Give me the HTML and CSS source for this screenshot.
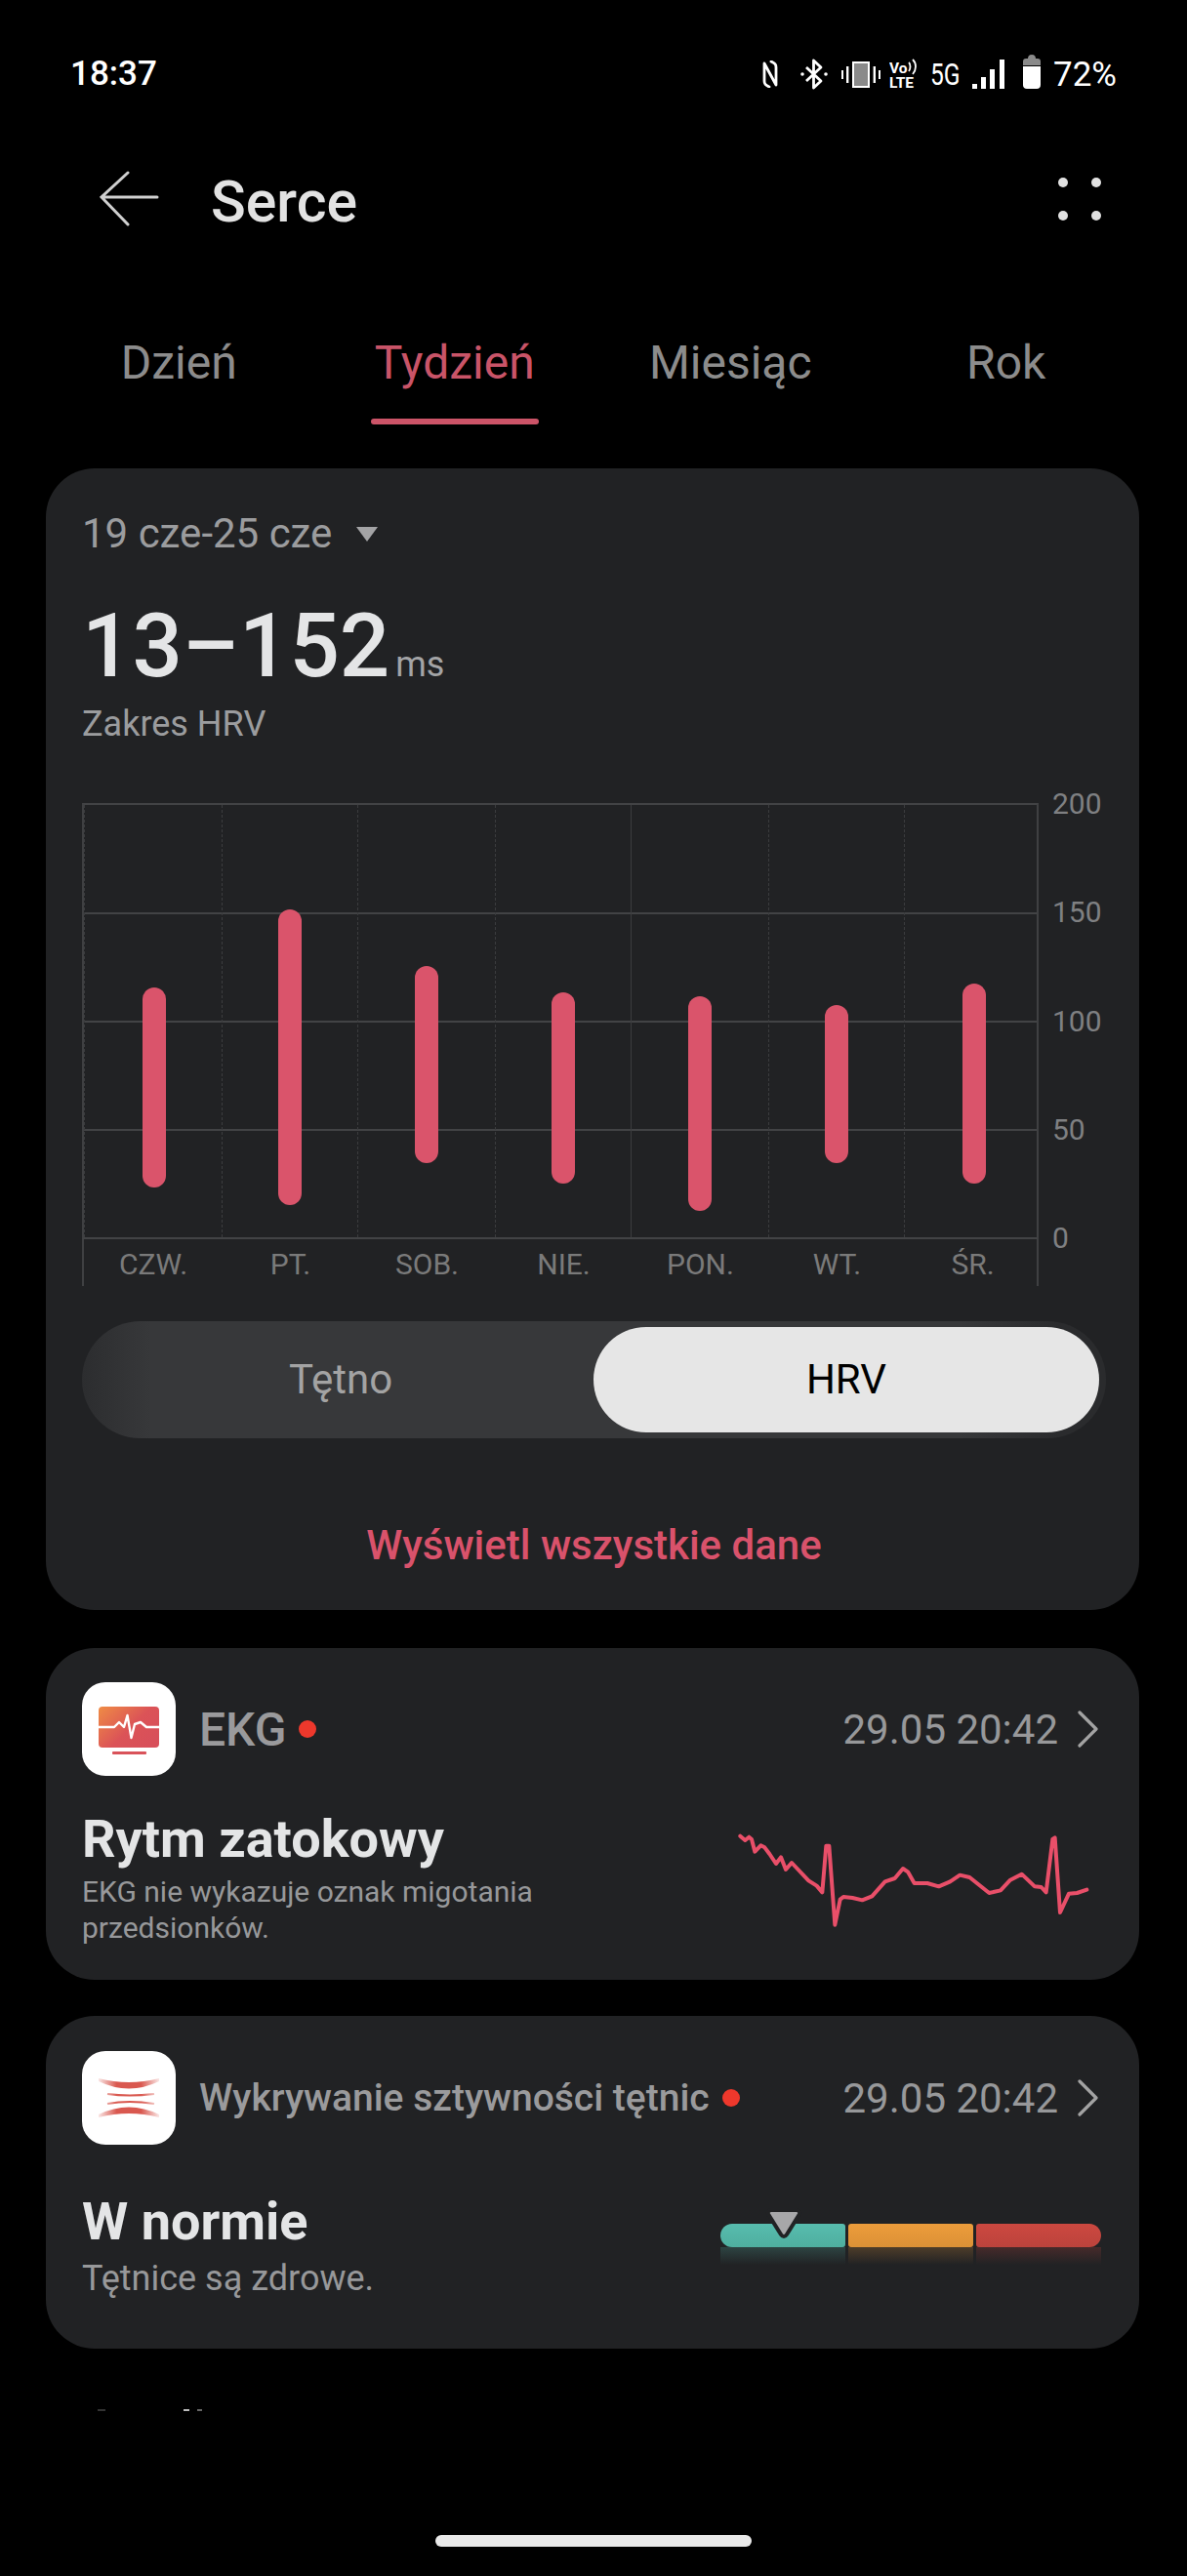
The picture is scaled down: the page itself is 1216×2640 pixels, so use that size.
FILE: index.html
```html
<!DOCTYPE html>
<html lang="pl">
<head>
    <meta charset="UTF-8">
    <meta name="viewport" content="width=device-width, initial-scale=1.0">
    <title>Serce</title>
    <link rel="stylesheet" href="styles.css">
</head>
<body>
    <!-- pasek stanu -->
    <div class="status-bar">
        <span class="time">18:37</span>
        <div class="status-icons">
            <svg class="ic-nfc" width="18" height="28" viewBox="0 0 18 28" fill="none" stroke="#fff" stroke-width="2.8" stroke-linecap="round" stroke-linejoin="round">
                <path d="M8 27C4 25 3 24 3 21V3L15 25V7C15 4 14 3 10 1"/>
            </svg>
            <svg class="ic-bt" width="28" height="32" viewBox="0 0 28 32" fill="none" stroke="#fff" stroke-width="2.8" stroke-linejoin="round">
                <path d="M6 9L21 23L13.5 30V2L21 9L6 23"/>
                <circle cx="2" cy="16" r="1.8" fill="#fff" stroke="none"/>
                <circle cx="26" cy="16" r="1.8" fill="#fff" stroke="none"/>
            </svg>
            <svg class="ic-vib" width="40" height="27" viewBox="0 0 40 27">
                <rect x="12" y="1" width="16" height="25" fill="#8a8a8a" stroke="#fff" stroke-width="2"/>
                <rect x="0" y="9" width="2" height="9" fill="#fff"/>
                <rect x="5" y="5" width="2.4" height="17" fill="#fff"/>
                <rect x="32.6" y="5" width="2.4" height="17" fill="#fff"/>
                <rect x="38" y="9" width="2" height="9" fill="#fff"/>
            </svg>
            <svg class="ic-volte" width="30" height="38" viewBox="0 0 30 38">
                <text x="0" y="18" class="volte-text">Vo</text>
                <text x="0" y="33" class="volte-text">LTE</text>
                <path d="M20 7C22 9 22 13 20 16M24 4C28 8 28 14 24 19" fill="none" stroke="#fff" stroke-width="1.8"/>
            </svg>
            <span class="net">5G</span>
            <svg class="ic-signal" width="33" height="30" viewBox="0 0 33 30" fill="#fff">
                <rect x="0" y="25" width="5" height="5"/>
                <rect x="9" y="18" width="5" height="12"/>
                <rect x="18" y="10" width="5" height="20"/>
                <rect x="28" y="0" width="5" height="30"/>
            </svg>
            <svg class="ic-batt" width="18" height="35" viewBox="0 0 18 35">
                <path d="M0 7C0 5 1 4 3 4H5C5 2 6 0 9 0C12 0 13 2 13 4H15C17 4 18 5 18 7V11H0Z" fill="#8a8a8a"/>
                <path d="M0 12H18V31C18 33.500 16.500 35 14 35H4C1.500 35 0 33.500 0 31Z" fill="#fff"/>
            </svg>
            <span class="batt-level">72%</span>
        </div>
    </div>

    <!-- nagłówek -->
    <header class="app-header">
        <svg class="back" width="62" height="58" viewBox="0 0 62 58" fill="none" stroke="#d0d0d0" stroke-width="3" stroke-linecap="round">
            <path d="M2 27H59M29 2L2 27L29 55"/>
        </svg>
        <h1>Serce</h1>
        <div class="more">
            <span></span><span></span><span></span><span></span>
        </div>
    </header>

    <!-- zakres czasu -->
    <nav class="tabs">
        <div class="tab">Dzień</div>
        <div class="tab active">Tydzień</div>
        <div class="tab">Miesiąc</div>
        <div class="tab">Rok</div>
    </nav>

    <section class="card card-main">
        <div class="range">19 cze-25 cze <span class="range-arrow"></span></div>
        <div class="value">13–152<small>ms</small></div>
        <div class="value-label">Zakres HRV</div>

        <div class="chart">
            <div class="chart-left">
                <div class="plot">
                    <div class="col"><i class="bar" style="margin-top:187px;height:205px"></i></div>
                    <div class="col"><i class="bar" style="margin-top:107px;height:303px"></i></div>
                    <div class="col"><i class="bar" style="margin-top:165px;height:202px"></i></div>
                    <div class="col"><i class="bar" style="margin-top:192px;height:196px"></i></div>
                    <div class="col solid"><i class="bar" style="margin-top:196px;height:220px"></i></div>
                    <div class="col"><i class="bar" style="margin-top:205px;height:162px"></i></div>
                    <div class="col"><i class="bar" style="margin-top:183px;height:205px"></i></div>
                </div>
                <div class="days">
                    <span>CZW.</span><span>PT.</span><span>SOB.</span><span>NIE.</span><span>PON.</span><span>WT.</span><span>ŚR.</span>
                </div>
            </div>
            <div class="y-axis">
                <span>200</span><span>150</span><span>100</span><span>50</span><span>0</span>
            </div>
        </div>

        <div class="switch">
            <div class="switch-off">Tętno</div>
            <div class="switch-on">HRV</div>
        </div>

        <div class="show-all">Wyświetl wszystkie dane</div>
    </section>

    <section class="card card-small">
        <div class="card-head">
            <svg class="app-icon" width="96" height="96" viewBox="0 0 96 96">
                <defs>
                    <linearGradient id="ekgFill" x1="0" y1="0" x2="1" y2="0.7">
                        <stop offset="0" stop-color="#ef8c45"/>
                        <stop offset="0.6" stop-color="#db5357"/>
                        <stop offset="1" stop-color="#d84f5a"/>
                    </linearGradient>
                </defs>
                <rect width="96" height="96" rx="24" fill="#fff"/>
                <rect x="17" y="25" width="62" height="42" rx="4" fill="url(#ekgFill)"/>
                <rect x="31" y="71" width="35" height="3" rx="1" fill="#d9535a"/>
                <path d="M17 46H33L38 41L43 46L46.500 34L50.500 57L54 43L60 41L66 46H79" fill="none" stroke="#fff" stroke-width="2.4" stroke-linejoin="round"/>
            </svg>
            <span class="head-title">EKG</span>
            <span class="red-dot"></span>
            <span class="head-date">29.05 20:42</span>
            <svg class="chevron" width="22" height="38" viewBox="0 0 22 38" fill="none" stroke="#a3a3a3" stroke-width="3.2" stroke-linecap="round" stroke-linejoin="round">
                <path d="M3 2L20 19L3 36"/>
            </svg>
        </div>
        <div class="card-body">
            <div class="result">
                <div class="result-title">Rytm zatokowy</div>
                <div class="result-text">EKG nie wykazuje oznak migotania przedsionków.</div>
            </div>
            <svg class="ecg" width="400" height="150" viewBox="0 0 1200 450" fill="none" stroke="#e94f69" stroke-width="12" stroke-linecap="round" stroke-linejoin="round">
                <path d="M85 95L100 108L112 98L120 105L130 143L148 124L160 130L175 150L195 180L210 160L225 198L243 177L260 195L295 232L320 248L337 268L349 125L358 125L376 368L392 290L402 282L430 285L460 292L490 280L530 235L560 225L585 195L600 205L620 240L660 240L695 250L730 235L760 215L790 222L850 270L885 262L915 230L950 212L990 250L1010 252L1025 268L1045 105L1052 100L1068 330L1095 272L1120 270L1150 260"/>
            </svg>
        </div>
    </section>

    <section class="card card-small card-arteries">
        <div class="card-head">
            <svg class="app-icon" width="96" height="96" viewBox="0 0 96 96">
                <defs>
                    <linearGradient id="arteryFill" gradientUnits="userSpaceOnUse" x1="17" y1="0" x2="79" y2="0">
                        <stop offset="0" stop-color="#d9584f" stop-opacity="0.15"/>
                        <stop offset="0.3" stop-color="#d9584f"/>
                        <stop offset="0.7" stop-color="#d9584f"/>
                        <stop offset="1" stop-color="#d9584f" stop-opacity="0.15"/>
                    </linearGradient>
                </defs>
                <rect width="96" height="96" rx="24" fill="#fff"/>
                <path d="M17 28Q48 36 79 28V31Q48 46 17 31Z M17 68Q48 60 79 68V65Q48 50 17 65Z" fill="url(#arteryFill)"/>
                <path d="M26 44Q48 47 74 44M26 54Q48 50 74 54" fill="none" stroke="url(#arteryFill)" stroke-width="2.2"/>
            </svg>
            <span class="head-title head-title-long">Wykrywanie sztywności tętnic</span>
            <span class="red-dot"></span>
            <span class="head-date">29.05 20:42</span>
            <svg class="chevron" width="22" height="38" viewBox="0 0 22 38" fill="none" stroke="#a3a3a3" stroke-width="3.2" stroke-linecap="round" stroke-linejoin="round">
                <path d="M3 2L20 19L3 36"/>
            </svg>
        </div>
        <div class="card-body">
            <div class="result">
                <div class="result-title">W normie</div>
                <div class="result-text">Tętnice są zdrowe.</div>
            </div>
            <div class="scale">
                <div class="seg seg-ok"></div>
                <div class="seg seg-mid"></div>
                <div class="seg seg-high"></div>
                <svg class="scale-marker" width="42" height="36" viewBox="0 0 42 36">
                    <path d="M8 3H34C37 3 38 6 36.500 8L24 28C22.500 30.500 19.500 30.500 18 28L5.500 8C4 6 5 3 8 3Z" fill="#a7a7a9" stroke="#212224" stroke-width="4"/>
                </svg>
            </div>
        </div>
    </section>

    <!-- początek kolejnej sekcji, ucięty przez dolną krawędź listy -->
    <div class="next-heading"><i class="speck-a"></i><i class="speck-b"></i><i class="speck-c"></i></div>

    <div class="home-bar"></div>
</body>
</html>
```

FILE: styles.css
```css
* {
    margin: 0;
    padding: 0;
    box-sizing: border-box;
}

body {
    width: 1216px;
    height: 2640px;
    overflow: hidden;
    background: #000;
    font-family: Roboto, 'Noto Sans', sans-serif;
    color: #e4e5e6;
}

/* pasek stanu */
.status-bar {
    height: 148px;
    padding: 4px 72px 0;
    display: flex;
    align-items: center;
    justify-content: space-between;
    color: #fff;
}

.time {
    font-size: 35px;
    font-weight: 500;
    margin-top: -2px;
}

.status-icons {
    display: flex;
    align-items: center;
}

.ic-bt { margin-left: 22px; }
.ic-vib { margin-left: 14px; }
.ic-volte { margin-left: 9px; }
.ic-signal { margin-left: 13px; }
.ic-batt { margin-left: 19px; margin-top: -6px; }

.volte-text {
    font-size: 15.500px;
    font-weight: 700;
    fill: #fff;
}

.net {
    margin-left: 12px;
    width: 39px;
    margin-right: -9px;
    font-size: 32px;
    transform: scaleX(0.77);
    transform-origin: left center;
    white-space: nowrap;
}

.batt-level {
    margin-left: 13px;
    font-size: 35px;
}

/* nagłówek */
.app-header {
    height: 112px;
    padding: 0 88px 0 102px;
    display: flex;
    align-items: center;
}

.app-header h1 {
    margin-left: 52px;
    margin-top: 4px;
    font-size: 59px;
    font-weight: 500;
    color: #e2e2e2;
}

.more {
    margin-left: auto;
    width: 44px;
    display: grid;
    grid-template-columns: 10px 10px;
    justify-content: space-between;
    row-gap: 24px;
}

.more span {
    height: 10px;
    border-radius: 50%;
    background: #e2e2e2;
}

/* zakres czasu */
.tabs {
    height: 220px;
    padding: 82px 44px 0 42px;
    display: grid;
    grid-template-columns: repeat(4, 1fr);
    align-items: start;
}

.tab {
    position: relative;
    height: 60px;
    line-height: 60px;
    text-align: center;
    font-size: 48px;
    color: #8c8c8c;
}

.tab.active {
    color: #c95468;
}

.tab.active::after {
    content: "";
    position: absolute;
    left: 55px;
    right: 55px;
    top: 87px;
    height: 6px;
    border-radius: 3px;
    background: #cc5468;
}

/* karty */
.card {
    margin: 0 49px 0 47px;
    border-radius: 50px;
    background: #212224;
}

.card-main {
    height: 1170px;
    padding: 44px 34px 0 37px;
}

.range {
    height: 46px;
    line-height: 46px;
    font-size: 42px;
    color: #9b9c9e;
    display: flex;
    align-items: center;
}

.range-arrow {
    margin-left: 25px;
    width: 0;
    height: 0;
    border-left: 11px solid transparent;
    border-right: 11px solid transparent;
    border-top: 15px solid #a3a3a5;
}

.value {
    margin-top: 37px;
    height: 110px;
    line-height: 110px;
    font-size: 90.500px;
    font-weight: 500;
    color: #e4e5e6;
}

.value small {
    margin-left: 6px;
    font-size: 36px;
    font-weight: 400;
    color: #a3a4a6;
}

.value-label {
    margin-top: 5px;
    height: 40px;
    line-height: 40px;
    font-size: 36px;
    color: #9b9c9e;
}

/* wykres */
.chart {
    margin-top: 61px;
    display: flex;
    align-items: flex-start;
}

.chart-left {
    width: 980px;
}

.plot,
.days {
    display: grid;
    grid-template-columns: 142px 139px 141px 139px 141px 139px 1fr;
    border-left: 2px solid #3f4042;
    border-right: 2px solid #3f4042;
}

.plot {
    height: 447px;
    border-top: 2px solid #424345;
    border-bottom: 2px solid #424345;
    background-image: linear-gradient(#424345, #424345), linear-gradient(#424345, #424345), linear-gradient(#424345, #424345);
    background-repeat: no-repeat;
    background-size: 100% 2px;
    background-position: 0 110px, 0 221px, 0 332px;
}

.col {
    border-right: 1px dashed #3b3c3e;
}

.col:first-child {
    padding-left: 2px;
    border-left: 1px dashed #3b3c3e;
}

.col:last-child {
    padding-left: 6px;
    border-right: none;
}

/* linia przed poniedziałkiem jest ciągła */
.col:nth-child(4) {
    border-right: 1px solid #3b3c3e;
}

.bar {
    display: block;
    width: 24px;
    margin-left: auto;
    margin-right: auto;
    border-radius: 12px;
    background: #da546b;
}

.days {
    height: 48px;
    padding-top: 4px;
}

.days span {
    text-align: center;
    font-size: 30px;
    line-height: 44px;
    color: #7a7a7a;
}

.days span:last-child {
    padding-left: 4px;
}

.y-axis {
    margin-left: 14px;
    height: 447px;
    display: flex;
    flex-direction: column;
    justify-content: space-between;
    font-size: 30px;
    color: #7f8082;
}

.y-axis span {
    height: 2px;
    line-height: 2px;
}

/* przełącznik */
.switch {
    margin-top: 36px;
    width: 1049px;
    height: 120px;
    padding: 6px 7px 6px 0;
    display: flex;
    border-radius: 60px;
    background: linear-gradient(90deg, #2c2d2f 0, #37383a 70px, #37383a 900px, #2a2b2d 1000px);
}

.switch-off {
    flex: 1;
    padding-left: 6px;
    text-align: center;
    line-height: 108px;
    font-size: 42px;
    color: #a3a3a3;
}

.switch-on {
    width: 518px;
    border-radius: 54px;
    background: #e6e6e6;
    text-align: center;
    line-height: 108px;
    font-size: 42px;
    color: #000;
}

.show-all {
    margin-top: 85px;
    height: 50px;
    line-height: 50px;
    text-align: center;
    font-size: 42px;
    font-weight: 500;
    color: #d9526b;
}

.card-small {
    height: 340px;
    margin-top: 39px;
    padding: 35px 42px 0 37px;
}

.card-arteries {
    height: 341px;
    margin-top: 37px;
    padding-top: 36px;
}

.card-head {
    height: 96px;
    display: flex;
    align-items: center;
}

.app-icon {
    flex: none;
}

.head-title {
    margin-left: 24px;
    font-size: 48px;
    font-weight: 500;
    color: #9a9a9c;
}

.head-title-long {
    margin-left: 24px;
    font-size: 39px;
}

.red-dot {
    margin-left: 13px;
    width: 18px;
    height: 18px;
    border-radius: 50%;
    background: #ee382c;
}

.head-date {
    margin-left: auto;
    font-size: 42px;
    color: #97989a;
}

.chevron {
    margin-left: 19px;
}

.card-body {
    margin-top: 35px;
    display: flex;
    align-items: flex-start;
}

.card-arteries .card-body {
    margin-top: 49px;
}

.result {
    flex: none;
    width: 646px;
}

.result-title {
    height: 60px;
    line-height: 60px;
    font-size: 54px;
    font-weight: 700;
    color: #e4e5e6;
}

.result-text {
    margin-top: 5px;
    max-width: 500px;
    font-size: 30px;
    line-height: 37px;
    color: #97989a;
}

.card-arteries .result-text {
    margin-top: 10px;
    font-size: 36px;
}

.ecg {
    margin-top: -5px;
    flex: none;
}

/* skala sztywności */
.scale {
    position: relative;
    margin-top: 32px;
    margin-left: 8px;
    display: flex;
    gap: 3px;
}

.seg {
    position: relative;
    width: 128px;
    height: 24px;
    border-radius: 3px;
}

.seg::after {
    content: "";
    position: absolute;
    left: 0;
    right: 0;
    top: 24px;
    height: 18px;
    opacity: 0.22;
}

.seg-ok {
    border-radius: 12px 3px 3px 12px;
    background: linear-gradient(#57bcae, #4faf9f);
}

.seg-ok::after {
    background: linear-gradient(#57bcae, transparent);
}

.seg-mid {
    background: linear-gradient(#ec9c3b, #dc9136);
}

.seg-mid::after {
    background: linear-gradient(#ec9c3b, transparent);
}

.seg-high {
    border-radius: 3px 12px 12px 3px;
    background: linear-gradient(#cc4840, #bc433c);
}

.seg-high::after {
    background: linear-gradient(#cc4840, transparent);
}

.scale-marker {
    position: absolute;
    left: 44px;
    top: -17px;
}

/* ucięty nagłówek kolejnej sekcji */
.next-heading {
    margin: 62px 0 0 100px;
    height: 3px;
    display: flex;
    align-items: flex-start;
}

.next-heading i {
    display: block;
    height: 2px;
    background: #666;
}

.speck-a {
    width: 8px;
    opacity: 0.5;
}

.speck-b {
    margin-left: 80px;
    width: 6px;
    background: #bbb !important;
}

.speck-c {
    margin-left: 8px;
    width: 5px;
}

.home-bar {
    margin: 126px 0 0 446px;
    width: 324px;
    height: 12px;
    border-radius: 6px;
    background: #e9e9e9;
}
```
